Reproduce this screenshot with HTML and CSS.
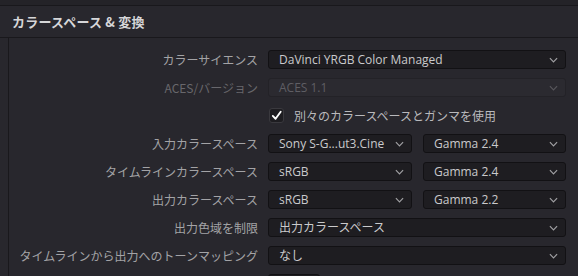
FILE: index.html
```html
<!DOCTYPE html>
<html lang="ja">
<head>
<meta charset="utf-8">
<link rel="stylesheet" href="styles.css">
</head>
<body>
<div class="topbar"></div>
<div class="header"><span class="title">カラースペース &amp; 変換</span></div>
<div class="panel">
  <div class="grid">
    <div class="label">カラーサイエンス</div>
    <div class="ctrl"><div class="select"><span>DaVinci YRGB Color Managed</span><svg class="chev" viewBox="0 0 10 6"><path d="M1 1 L5 5 L9 1"/></svg></div></div>

    <div class="label dim">ACES/バージョン</div>
    <div class="ctrl"><div class="select disabled"><span>ACES 1.1</span><svg class="chev" viewBox="0 0 10 6"><path d="M1 1 L5 5 L9 1"/></svg></div></div>

    <div class="label"></div>
    <div class="ctrl check-row"><span class="checkbox"><svg viewBox="0 0 14 14"><path d="M3 7.5 L6 10.5 L11.5 3"/></svg></span><span class="check-label">別々のカラースペースとガンマを使用</span></div>

    <div class="label">入力カラースペース</div>
    <div class="ctrl split"><div class="select"><span>Sony S-G...ut3.Cine</span><svg class="chev" viewBox="0 0 10 6"><path d="M1 1 L5 5 L9 1"/></svg></div><div class="select"><span>Gamma 2.4</span><svg class="chev" viewBox="0 0 10 6"><path d="M1 1 L5 5 L9 1"/></svg></div></div>

    <div class="label">タイムラインカラースペース</div>
    <div class="ctrl split"><div class="select"><span>sRGB</span><svg class="chev" viewBox="0 0 10 6"><path d="M1 1 L5 5 L9 1"/></svg></div><div class="select"><span>Gamma 2.4</span><svg class="chev" viewBox="0 0 10 6"><path d="M1 1 L5 5 L9 1"/></svg></div></div>

    <div class="label">出力カラースペース</div>
    <div class="ctrl split"><div class="select"><span>sRGB</span><svg class="chev" viewBox="0 0 10 6"><path d="M1 1 L5 5 L9 1"/></svg></div><div class="select"><span>Gamma 2.2</span><svg class="chev" viewBox="0 0 10 6"><path d="M1 1 L5 5 L9 1"/></svg></div></div>

    <div class="label">出力色域を制限</div>
    <div class="ctrl"><div class="select"><span>出力カラースペース</span><svg class="chev" viewBox="0 0 10 6"><path d="M1 1 L5 5 L9 1"/></svg></div></div>

    <div class="label">タイムラインから出力へのトーンマッピング</div>
    <div class="ctrl"><div class="select"><span>なし</span><svg class="chev" viewBox="0 0 10 6"><path d="M1 1 L5 5 L9 1"/></svg></div></div>

    <div class="label"></div>
    <div class="ctrl"><div class="select small"><span>&nbsp;</span></div></div>
  </div>
</div>
</body>
</html>
```
FILE: styles.css
```css
html, body {
  margin: 0;
  padding: 0;
}
body {
  background: #28272d;
  width: 578px;
  height: 276px;
  overflow: hidden;
  font-family: "Open Sans", "Noto Sans CJK JP", sans-serif;
}
.topbar {
  height: 5px;
  background: #242328;
  border-bottom: 1px solid #19181c;
}
.header {
  height: 31px;
  display: flex;
  align-items: center;
  padding-left: 12px;
  border-bottom: 1px solid #19181c;
}
.title {
  font-family: "Noto Sans CJK JP", sans-serif;
  font-size: 13px;
  font-weight: 700;
  color: #d6d6d8;
  letter-spacing: 0.2px;
}
.panel {
  margin-left: 8px;
  border-left: 1px solid #19181c;
  background: #28272d;
  padding-top: 12px;
  height: 226px;
  overflow: hidden;
}
.grid {
  display: grid;
  grid-template-columns: 249px 298px;
  grid-auto-rows: 19px;
  column-gap: 10px;
  row-gap: 9px;
}
.label {
  font-family: "Noto Sans CJK JP", sans-serif;
  font-size: 12px;
  color: #a3a3a6;
  text-align: right;
  line-height: 19px;
  white-space: nowrap;
}
.label.dim {
  color: #68676c;
}
.ctrl {
  display: flex;
  min-width: 0;
}
.split {
  gap: 11px;
}
.split .select:first-child {
  width: 144px;
  flex: none;
}
.select {
  flex: 1;
  box-sizing: border-box;
  height: 19px;
  background: #1e1d21;
  border: 1px solid #121114;
  border-radius: 3px;
  display: flex;
  align-items: center;
  justify-content: space-between;
  padding: 0 7px 0 10px;
  font-size: 12px;
  color: #cacacc;
  white-space: nowrap;
}
.select span {
  line-height: 17px;
}
.select.disabled {
  background: #2b2a30;
  border-color: #232227;
  color: #5f5e64;
}
.select.small {
  flex: none;
  width: 52px;
}
.chev {
  width: 9px;
  height: 6px;
  flex: none;
}
.chev path {
  fill: none;
  stroke: #a0a0a3;
  stroke-width: 1.3;
}
.select.disabled .chev path {
  stroke: #57565b;
}
.check-row {
  align-items: center;
  gap: 10px;
  padding-left: 1px;
}
.checkbox {
  width: 15px;
  height: 15px;
  box-sizing: border-box;
  background: #1e1d21;
  border: 1px solid #3a393e;
  border-radius: 3px;
  display: flex;
  align-items: center;
  justify-content: center;
}
.checkbox svg {
  width: 13px;
  height: 13px;
}
.checkbox path {
  fill: none;
  stroke: #ffffff;
  stroke-width: 2;
  stroke-linecap: round;
  stroke-linejoin: round;
}
.check-label {
  font-family: "Noto Sans CJK JP", sans-serif;
  font-size: 12px;
  color: #b9b9bc;
}
```
